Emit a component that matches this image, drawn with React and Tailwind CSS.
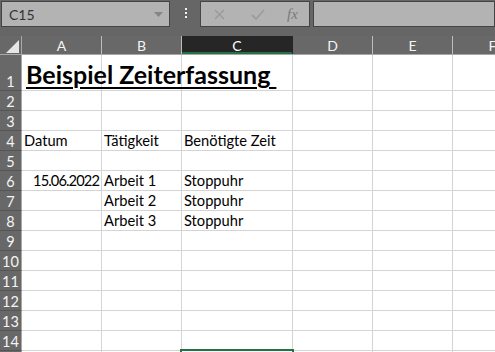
import React from 'react';

const COLS = [
  { name: 'A', w: 'w-[80px]' },
  { name: 'B', w: 'w-[80px]' },
  { name: 'C', w: 'w-[111px]', active: true },
  { name: 'D', w: 'w-[80px]' },
  { name: 'E', w: 'w-[80px]' },
  { name: 'F', w: 'w-[80px]' },
];

const ROWS = {
  4: ['Datum', 'Tätigkeit', 'Benötigte Zeit'],
  6: ['15.06.2022', 'Arbeit 1', 'Stoppuhr'],
  7: ['', 'Arbeit 2', 'Stoppuhr'],
  8: ['', 'Arbeit 3', 'Stoppuhr'],
};

const FONT = "font-['Lato','Liberation_Sans',sans-serif]";

function TopBar() {
  return (
    <div className="flex h-[36px] items-start pt-px pl-px">
      <div className="flex h-[26px] w-[169px] items-center justify-between border border-[#454545] bg-[#b3b3b3] pl-[7px] pr-[6px]">
        <span className="text-[14px] text-[#333]">C15</span>
        <svg width="9" height="5" viewBox="0 0 9 5">
          <path d="M0 0h9L4.5 5z" fill="#858585" />
        </svg>
      </div>
      <div className="flex w-[30px] flex-col items-center gap-[2px] pt-[7px] pl-[1px]">
        <span className="h-[2px] w-[2px] bg-[#f2f2f2]" />
        <span className="h-[2px] w-[2px] bg-[#f2f2f2]" />
        <span className="h-[2px] w-[2px] bg-[#f2f2f2]" />
      </div>
      <div className="flex h-[26px] w-[110px] items-center border border-[#454545] bg-[#b3b3b3]">
        <svg className="ml-[13px]" width="11" height="11" viewBox="0 0 11 11">
          <path d="M1 1l9 9M10 1l-9 9" stroke="#9c9c9c" strokeWidth="1.6" />
        </svg>
        <svg className="ml-[26px]" width="14" height="11" viewBox="0 0 14 11">
          <path d="M1 6l4 4 8-9" stroke="#9c9c9c" strokeWidth="1.8" fill="none" />
        </svg>
        <span className="ml-[22px] font-['Liberation_Serif',serif] text-[15px] italic text-[#7a7a7a]">
          fx
        </span>
      </div>
      <div className="ml-[3px] h-[26px] flex-1 border border-[#454545] bg-[#b3b3b3]" />
    </div>
  );
}

function HeaderRow() {
  return (
    <div className="flex h-[19px] border-b border-[#a8a8a8]">
      <div className="relative w-[22px] shrink-0 border-r border-[#a8a8a8] bg-[#686868]">
        <svg className="absolute left-[6px] top-[4px]" width="13" height="13" viewBox="0 0 13 13">
          <path d="M13 0v13H0z" fill="#e6e6e6" />
        </svg>
      </div>
      {COLS.map((c) => (
        <div
          key={c.name}
          className={`${c.w} shrink-0 flex items-center justify-center border-r text-[14px] ${
            c.active
              ? 'border-[#262626] bg-[#262626] text-white shadow-[inset_0_-2px_0_#217346]'
              : 'border-[#bdbdbd] bg-[#686868] text-[#f4f4f4]'
          }`}
        >
          {c.name}
        </div>
      ))}
    </div>
  );
}

function Row({ n }) {
  const vals = ROWS[n] || [];
  const h = n === 1 ? 'h-[36px]' : 'h-[20px]';
  return (
    <div className={`flex ${h}`}>
      <div className="flex w-[22px] shrink-0 items-end justify-center border-r border-b border-r-[#a8a8a8] border-b-[#555] bg-[#686868] pb-px text-[14.5px] leading-none text-[#f4f4f4]">
        {n < 15 ? n : ''}
      </div>
      {COLS.map((c, i) => (
        <div
          key={c.name}
          className={`${c.w} shrink-0 flex items-end border-r border-b border-[#d4d4d4] bg-white px-[2px] pb-px text-[14.67px] leading-none text-black ${
            n === 6 && i === 0 ? 'justify-end' : ''
          }`}
        >
          {n === 1 && i === 0 ? (
            <span className="relative z-10 ml-[2px] whitespace-nowrap pb-[2px] text-[25px] font-bold underline decoration-[2px] underline-offset-[3px]">
              Beispiel Zeiterfassung&nbsp;
            </span>
          ) : n === 6 && i === 0 ? (
            <span className="whitespace-nowrap tracking-[-0.9px]">{vals[i]}</span>
          ) : (
            <span className="whitespace-nowrap">{vals[i] || ''}</span>
          )}
        </div>
      ))}
    </div>
  );
}

export default function App() {
  return (
    <div className={`h-[352px] w-[495px] overflow-hidden bg-[#666] ${FONT}`}>
      <TopBar />
      <HeaderRow />
      <div className="relative">
        {[1, 2, 3, 4, 5, 6, 7, 8, 9, 10, 11, 12, 13, 14, 15].map((n) => (
          <Row key={n} n={n} />
        ))}
        <div className="absolute left-[180px] top-[294px] h-[40px] w-[114px] border-2 border-[#217346]" />
      </div>
    </div>
  );
}
